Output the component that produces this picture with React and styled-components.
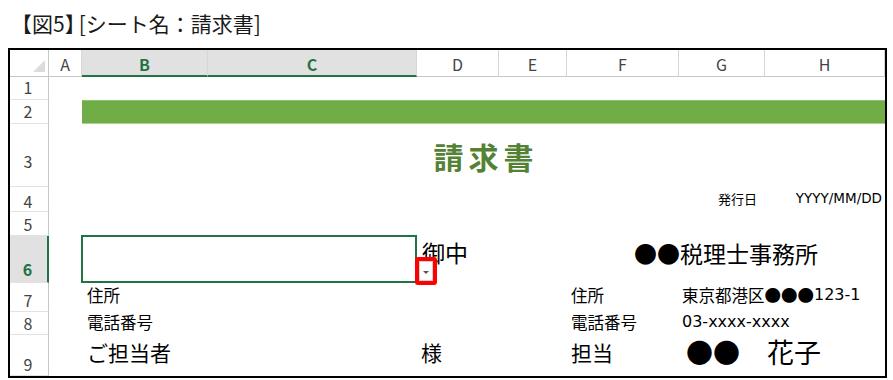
import styled, { createGlobalStyle } from "styled-components";

const GlobalStyle = createGlobalStyle`
  html, body {
    margin: 0;
    padding: 0;
    background: #ffffff;
  }
  body {
    font-family: "Noto Sans CJK JP", "Noto Sans", sans-serif;
    color: #000000;
  }
`;

const COLS = [39, 33, 126, 209, 82, 68, 112, 86, 120];
const ROWS = [
  { n: 1, h: 23, pb: 4 },
  { n: 2, h: 24, pb: 4 },
  { n: 3, h: 63, pb: 17 },
  { n: 4, h: 25, pb: 2 },
  { n: 5, h: 24, pb: 3 },
  { n: 6, h: 47, pb: 5 },
  { n: 7, h: 29, pb: 3 },
  { n: 8, h: 23, pb: 3 },
  { n: 9, h: 41, pb: 3 },
];
const LETTERS = ["A", "B", "C", "D", "E", "F", "G", "H"];
const SELECTED_COLS = ["B", "C"];
const GREEN = "#217346";

const Page = styled.div`
  padding: 11px 0 0 8px;
  width: 879px;
`;

const Caption = styled.div`
  font-size: 21px;
  line-height: 25px;
  height: 25px;
  padding-left: 3px;
  color: #1a1a1a;
  margin-bottom: 12px;
  white-space: nowrap;
`;

// 】 and [ sit closer in the original
const CaptionTail = styled.span`
  margin-left: -7px;
`;

const Frame = styled.div`
  border: 2px solid #000000;
  width: 875px;
`;

const Sheet = styled.div`
  display: grid;
  grid-template-columns: ${COLS.map((c) => `${c}px`).join(" ")};
  grid-template-rows: 27px ${ROWS.map((r) => `${r.h}px`).join(" ")};
`;

const Corner = styled.div`
  grid-column: 1;
  grid-row: 1;
  position: relative;
  border-right: 1px solid #c6c6c6;
  border-bottom: 1px solid #c6c6c6;
  box-sizing: border-box;

  &::after {
    content: "";
    position: absolute;
    right: 3px;
    bottom: 4px;
    width: 0;
    height: 0;
    border-left: 12px solid transparent;
    border-bottom: 12px solid #dcdcdc;
  }
`;

const ColHead = styled.div`
  grid-row: 1;
  display: flex;
  align-items: center;
  justify-content: center;
  box-sizing: border-box;
  font-size: 16px;
  line-height: 1;
  padding-top: 2px;
  color: ${(p) => (p.$selected ? GREEN : "#444444")};
  font-weight: ${(p) => (p.$selected ? 700 : 400)};
  background: ${(p) => (p.$selected ? "#e1e1e1" : "#ffffff")};
  border-right: 1px solid #d6d6d6;
  border-bottom: ${(p) => (p.$selected ? `2px solid ${GREEN}` : "1px solid #c6c6c6")};
`;

const RowHead = styled.div`
  grid-column: 1;
  display: flex;
  align-items: flex-end;
  justify-content: center;
  box-sizing: border-box;
  font-size: 16px;
  line-height: 1;
  padding-bottom: ${(p) => p.$pb}px;
  padding-right: 2px;
  color: ${(p) => (p.$selected ? GREEN : "#444444")};
  font-weight: ${(p) => (p.$selected ? 700 : 400)};
  background: ${(p) => (p.$selected ? "#e1e1e1" : "#ffffff")};
  border-right: ${(p) => (p.$selected ? `2px solid ${GREEN}` : "1px solid #c6c6c6")};
  border-bottom: 1px solid #e2e2e2;
`;

const Cell = styled.div`
  grid-column: ${(p) => p.$col};
  grid-row: ${(p) => p.$row};
  display: flex;
  align-items: ${(p) => (p.$middle ? "center" : "flex-end")};
  justify-content: ${(p) => p.$justify || "flex-start"};
  padding: 0 ${(p) => p.$pr || 0}px ${(p) => p.$pb || 0}px ${(p) => p.$pl || 0}px;
  font-size: ${(p) => p.$size || 16.5}px;
  line-height: 1;
  white-space: nowrap;
  min-width: 0;
`;

// Latin runs in the sheet use a wide sans, like the original's UI font
const Latin = styled.span`
  font-family: "DejaVu Sans", "Noto Sans", sans-serif;
  font-size: ${(p) => p.$size || 16}px;
`;

const Banner = styled.div`
  grid-column: 3 / 10;
  grid-row: 3;
  background: #70ad47;
  border-top: 1px solid #8cc26a;
  border-bottom: 1px solid #a9d18e;
`;

const DocTitle = styled(Cell)`
  color: #548235;
  font-weight: 700;
  letter-spacing: 5px;
  padding-left: 5px;
`;

const Selection = styled.div`
  grid-column: 3 / 5;
  grid-row: 7;
  position: relative;
  margin: -1px 0 0 -1px;
  border: 2px solid ${GREEN};
`;

const DropButton = styled.div`
  position: absolute;
  left: 100%;
  bottom: -4px;
  width: 14px;
  height: 20px;
  border: 4px solid #ff0000;
  border-radius: 3px;
  background: #ffffff;
  display: flex;
  align-items: center;
  justify-content: center;
  z-index: 2;

  &::before {
    content: "";
    position: absolute;
    inset: 0;
    border: 1px solid #d0d0d0;
  }

  &::after {
    content: "";
    width: 0;
    height: 0;
    border-left: 3px solid transparent;
    border-right: 3px solid transparent;
    border-top: 3px solid #555555;
    margin-top: 2px;
  }
`;

export default function App() {
  return (
    <>
      <GlobalStyle />
      <Page>
        <Caption>
          【図5】<CaptionTail>[シート名：請求書]</CaptionTail>
        </Caption>
        <Frame>
          <Sheet>
            <Corner />
            {LETTERS.map((l, i) => (
              <ColHead key={l} style={{ gridColumn: i + 2 }} $selected={SELECTED_COLS.includes(l)}>
                {l}
              </ColHead>
            ))}
            {ROWS.map((r) => (
              <RowHead key={r.n} style={{ gridRow: r.n + 1 }} $pb={r.pb} $selected={r.n === 6}>
                {r.n}
              </RowHead>
            ))}

            <Banner />
            <DocTitle $col="3 / 10" $row={4} $middle $justify="center" $size={30}>
              請求書
            </DocTitle>

            <Cell $col={8} $row={5} $justify="flex-end" $pr={8} $pb={7} $size={13}>
              発行日
            </Cell>
            <Cell $col={9} $row={5} $justify="flex-end" $pr={3} $pb={7} $size={13}>
              <Latin $size={13.5}>YYYY/MM/DD</Latin>
            </Cell>

            <Selection>
              <DropButton />
            </Selection>
            <Cell $col={5} $row={7} $pl={5} $pb={19} $size={23}>
              御中
            </Cell>
            <Cell $col="7 / 10" $row={7} $justify="center" $pb={18} $size={23}>
              ●●税理士事務所
            </Cell>

            <Cell $col={3} $row={8} $pl={5} $pb={9}>
              住所
            </Cell>
            <Cell $col={7} $row={8} $pl={4} $pb={9}>
              住所
            </Cell>
            <Cell $col="8 / 10" $row={8} $pl={3} $pb={9}>
              東京都港区●●●<Latin>123-1</Latin>
            </Cell>

            <Cell $col={3} $row={9} $pl={5} $pb={5}>
              電話番号
            </Cell>
            <Cell $col={7} $row={9} $pl={4} $pb={5}>
              電話番号
            </Cell>
            <Cell $col="8 / 10" $row={9} $pl={3} $pb={5}>
              <Latin>03-xxxx-xxxx</Latin>
            </Cell>

            <Cell $col="3 / 5" $row={10} $pl={5} $pb={13} $size={21}>
              ご担当者
            </Cell>
            <Cell $col={5} $row={10} $pl={4} $pb={13} $size={21}>
              様
            </Cell>
            <Cell $col={7} $row={10} $pl={4} $pb={13} $size={21}>
              担当
            </Cell>
            <Cell $col="8 / 10" $row={10} $pl={7} $pb={11} $size={27}>
              ●●　花子
            </Cell>
          </Sheet>
        </Frame>
      </Page>
    </>
  );
}
